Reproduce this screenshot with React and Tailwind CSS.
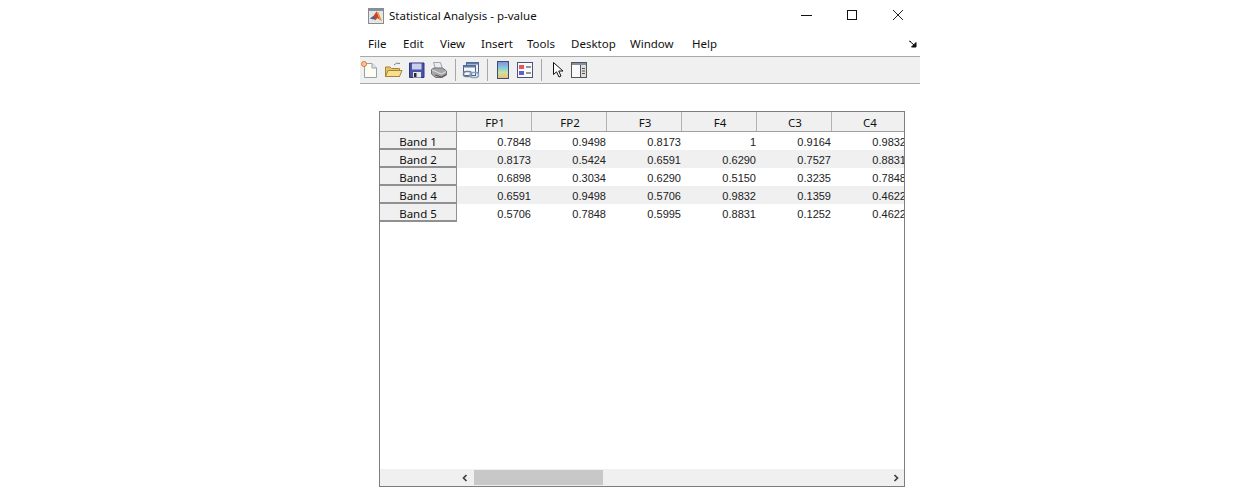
import React from "react";

const menus = ["File", "Edit", "View", "Insert", "Tools", "Desktop", "Window", "Help"];
const menuGaps = ["w-[35px]", "w-[37px]", "w-[41px]", "w-[46px]", "w-[44px]", "w-[59px]", "w-[62px]", "w-[40px]"];
const columns = ["FP1", "FP2", "F3", "F4", "C3", "C4"];
const rows = [
  ["Band 1", "0.7848", "0.9498", "0.8173", "1", "0.9164", "0.9832"],
  ["Band 2", "0.8173", "0.5424", "0.6591", "0.6290", "0.7527", "0.8831"],
  ["Band 3", "0.6898", "0.3034", "0.6290", "0.5150", "0.3235", "0.7848"],
  ["Band 4", "0.6591", "0.9498", "0.5706", "0.9832", "0.1359", "0.4622"],
  ["Band 5", "0.5706", "0.7848", "0.5995", "0.8831", "0.1252", "0.4622"],
];

const Sep = () => <div className="w-px h-[22px] bg-[#a8a8a8] shrink-0" />;

const MatlabIcon = () => (
  <svg width="16" height="16" viewBox="0 0 16 16">
    <rect x="0.5" y="0.5" width="15" height="15" fill="#e6e6e6" stroke="#8c8c8c" />
    <rect x="1" y="1" width="14" height="2" fill="#7d93ad" />
    <path d="M2 10.5 L5.5 8 L8.5 3.5 L12 12 L9.5 10 L7 12.5 L5.5 10 Z" fill="#c8451d" />
    <path d="M2 10.5 L5.5 8 L7 10 L5.5 11.5 Z" fill="#2d6fa8" />
    <path d="M8.5 3.5 L12 12 L14 13 L10.5 4.5 Z" fill="#e8912a" />
  </svg>
);

const NewIcon = () => (
  <svg width="18" height="18" viewBox="0 0 18 18">
    <path d="M3.5 2.5 H11 L15.5 7 V16.5 H3.5 Z" fill="#fdfdf0" stroke="#8fa3b8" />
    <path d="M11 2.5 V7 H15.5" fill="#dfe7ef" stroke="#8fa3b8" />
    <circle cx="3" cy="3" r="2.5" fill="#f7c8a0" stroke="#e2733c" />
  </svg>
);

const OpenIcon = () => (
  <svg width="18" height="18" viewBox="0 0 18 18">
    <path d="M9 4 Q11 1 15 2.5" fill="none" stroke="#6f8296" />
    <path d="M0.5 6 H5 L6.5 7.5 H14.5 V15.5 H0.5 Z" fill="#e8c45c" stroke="#a3843a" />
    <path d="M0.5 15.5 L3 9.5 H17 L14.5 15.5 Z" fill="#f7e08c" stroke="#a3843a" />
  </svg>
);

const SaveIcon = () => (
  <svg width="16" height="16" viewBox="0 0 16 16">
    <path d="M0.5 1 H15 V15.5 H0.5 Z" fill="#4a55a8" stroke="#2e3578" />
    <rect x="3" y="1.5" width="9.5" height="6" fill="#c9cfee" />
    <rect x="4" y="10" width="8" height="5.5" fill="#e8e8e8" />
    <rect x="5" y="11" width="2.5" height="4" fill="#2b2b2b" />
  </svg>
);

const PrintIcon = () => (
  <svg width="16" height="18" viewBox="0 0 16 18">
    <path d="M2.5 1.5 H9.5 L11.5 8 H4.5 Z" fill="#e9edf2" stroke="#9aa5b0" />
    <path d="M0.5 8.5 L3 7 H11.5 L15.5 10 V14 L11 16.5 H4.5 L0.5 13 Z" fill="#a6a6a6" stroke="#707070" />
    <path d="M1 9 L10.5 13 L15 10.5" fill="none" stroke="#e2e2e2" />
    <path d="M4 14 L10.5 16 L15 13.5" fill="none" stroke="#505050" />
  </svg>
);

const LinkIcon = () => (
  <svg width="18" height="18" viewBox="0 0 18 18">
    <rect x="4.5" y="1.5" width="12" height="10" fill="#eef1f6" stroke="#46628a" />
    <rect x="4.5" y="1.5" width="12" height="2" fill="#5c7aa6" />
    <rect x="1.5" y="4.5" width="12" height="10" fill="#f5f6fa" stroke="#46628a" />
    <rect x="1.5" y="4.5" width="12" height="2" fill="#5c7aa6" />
    <rect x="1.5" y="10.5" width="8" height="5" rx="2.5" fill="none" stroke="#6b7f99" strokeWidth="1.5" />
    <rect x="8" y="11.5" width="8.5" height="5" rx="2.5" fill="none" stroke="#8ea2ba" strokeWidth="1.5" />
  </svg>
);

const ColorbarIcon = () => (
  <svg width="12" height="18" viewBox="0 0 12 18">
    <defs>
      <linearGradient id="cbar" x1="0" y1="0" x2="0" y2="1">
        <stop offset="0" stopColor="#7e8fd8" />
        <stop offset="0.35" stopColor="#86c8e0" />
        <stop offset="0.65" stopColor="#c8e4a0" />
        <stop offset="1" stopColor="#f4b878" />
      </linearGradient>
    </defs>
    <rect x="0.5" y="0.5" width="11" height="17" fill="url(#cbar)" stroke="#3e4f72" />
  </svg>
);

const LegendIcon = () => (
  <svg width="16" height="16" viewBox="0 0 16 16">
    <rect x="0.5" y="0.5" width="15" height="15" fill="#fafafa" stroke="#46587a" />
    <rect x="2" y="3" width="5" height="4" fill="#e8555a" />
    <rect x="2" y="9" width="5" height="4" fill="#5a60d8" />
    <path d="M9 5 H14 M9 11 H14" stroke="#333" />
  </svg>
);

const PointerIcon = () => (
  <svg width="12" height="16" viewBox="0 0 12 16">
    <path d="M1.5 0.5 V12.5 L4.5 9.8 L7 15 L9 14 L6.7 9 H11 Z" fill="#fff" stroke="#111" />
  </svg>
);

const PaneIcon = () => (
  <svg width="16" height="16" viewBox="0 0 16 16">
    <rect x="0.5" y="0.5" width="15" height="15" fill="#fafafa" stroke="#555" />
    <rect x="1" y="1" width="14" height="2" fill="#7d93ad" />
    <rect x="10" y="3" width="5" height="12" fill="#dcdcdc" />
    <path d="M9.5 3 V15 M11 6.5 H14 M11 9 H14 M11 11.5 H14" stroke="#555" />
  </svg>
);

export default function App() {
  return (
    <div className="w-[1260px] h-[496px] bg-white pl-[360px] overflow-hidden font-['Noto_Sans',sans-serif] text-[#111]">
      <div className="w-[560px] flex flex-col">
        {/* title bar */}
        <div className="h-[33px] flex items-center shrink-0">
          <div className="ml-2 mr-[5px] mt-[-2px]"><MatlabIcon /></div>
          <span className="text-[11.5px] mt-[-2px]">Statistical Analysis - p-value</span>
          <div className="ml-auto flex items-center mt-[-3px]">
            <div className="w-[11px] h-px bg-[#111] mr-[35px]" />
            <div className="w-[10px] h-[10px] border border-[#111] mr-[35px]" />
            <svg width="12" height="12" viewBox="0 0 12 12" className="mr-[16px]">
              <path d="M1 1 L11 11 M11 1 L1 11" stroke="#222" fill="none" />
            </svg>
          </div>
        </div>
        {/* menu bar */}
        <div className="h-[23px] flex items-center pl-2 shrink-0">
          {menus.map((m, i) => (
            <div key={m} className={`${menuGaps[i]} text-[11.5px] mt-[-1px] shrink-0`}>{m}</div>
          ))}
          <svg width="8" height="8" viewBox="0 0 8 8" className="ml-auto mr-[3px] mt-[-2px]">
            <path d="M0.5 1 L5 5 M2 1.5 H0.5 M7 2.5 V7 H2.5 Z" stroke="#111" fill="#111" />
          </svg>
        </div>
        {/* toolbar */}
        <div className="h-[28px] bg-[#f0f0f0] border-y border-[#a9a9a9] flex items-center pl-[1px] shrink-0">
          <NewIcon />
          <div className="ml-[6px]"><OpenIcon /></div>
          <div className="ml-[6px]"><SaveIcon /></div>
          <div className="ml-[6px]"><PrintIcon /></div>
          <div className="ml-[8px]"><Sep /></div>
          <div className="ml-[6px]"><LinkIcon /></div>
          <div className="ml-[7px]"><Sep /></div>
          <div className="ml-[9px]"><ColorbarIcon /></div>
          <div className="ml-[8px]"><LegendIcon /></div>
          <div className="ml-[8px]"><Sep /></div>
          <div className="ml-[10px]"><PointerIcon /></div>
          <div className="ml-[7px]"><PaneIcon /></div>
        </div>
        {/* table frame */}
        <div className="mt-[27px] ml-[19px] w-[526px] h-[376px] border border-[#7c7c84] bg-white flex flex-col overflow-hidden shrink-0">
          <div className="flex-1 min-h-0 overflow-hidden">
            <div className="flex h-[20px] bg-[#f0f0f0] border-b border-[#a0a0a0] w-[600px]">
              <div className="w-[77px] border-r border-[#a0a0a0] shrink-0" />
              {columns.map((c) => (
                <div key={c} className="w-[75px] shrink-0 border-r border-[#b4b4b4] pl-[2px] text-center text-[11.5px] leading-[21px]">{c}</div>
              ))}
            </div>
            {rows.map((r, i) => (
              <div key={r[0]} className={`flex h-[18px] w-[600px] ${i % 2 ? "bg-[#f0f0f0]" : "bg-white"}`}>
                <div className="w-[77px] shrink-0 bg-[#f0f0f0] border-b-2 border-r border-[#909090] text-center text-[11.5px] leading-[20px]">{r[0]}</div>
                {r.slice(1).map((v, j) => (
                  <div key={j} className="w-[75px] shrink-0 text-right pr-[1px] text-[11px] leading-[20px] font-['Liberation_Sans',sans-serif] text-[#222]">{v}</div>
                ))}
              </div>
            ))}
          </div>
          {/* horizontal scrollbar */}
          <div className="h-[17px] bg-[#f0f0f0] flex items-center shrink-0">
            <div className="w-[81px] shrink-0" />
            <svg width="8" height="8" viewBox="0 0 8 8" className="shrink-0">
              <path d="M5.5 1 L2.5 4 L5.5 7" fill="none" stroke="#404040" strokeWidth="1.7" />
            </svg>
            <div className="ml-[5px] w-[129px] h-[15px] bg-[#c8c8c8] shrink-0" />
            <svg width="8" height="8" viewBox="0 0 8 8" className="ml-auto mr-[4px] shrink-0">
              <path d="M2.5 1 L5.5 4 L2.5 7" fill="none" stroke="#404040" strokeWidth="1.7" />
            </svg>
          </div>
        </div>
      </div>
    </div>
  );
}
